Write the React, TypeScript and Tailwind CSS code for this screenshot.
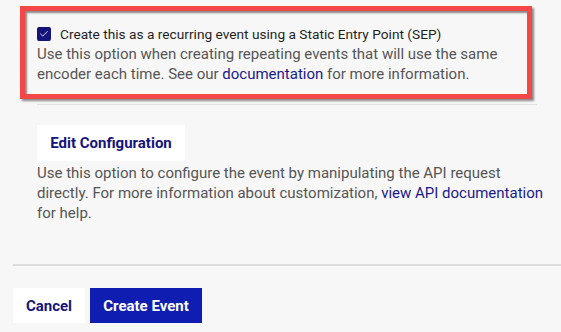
import { Check } from "lucide-react";

function CheckBox() {
  return (
    <span className="flex h-[14px] w-[14px] shrink-0 items-center justify-center rounded-[2px] bg-[#14147a]">
      <Check className="h-[10px] w-[10px] text-white" strokeWidth={2} />
    </span>
  );
}

export default function App() {
  return (
    <div className="h-[332px] w-[561px] overflow-hidden bg-[#f7f7f7] text-[15px] leading-[20px] text-[#555] [font-family:Roboto,'Liberation_Sans',sans-serif]">
      <section className="relative ml-[37px] w-[500px] border-b border-[#e0e0e0] pb-[20px] pt-[24px]">
        <label className="flex items-center gap-[9px] text-[13.7px] text-[#1f1f1f]">
          <CheckBox />
          Create this as a recurring event using a Static Entry Point (SEP)
        </label>
        <p>
          Use this option when creating repeating events that will use the same encoder each time. See our{" "}
          <a className="text-[#1a1a8c]">documentation</a> for more information.
        </p>
        <div className="pointer-events-none absolute left-[-17px] top-[6px] h-[93px] w-[512px] border-[5px] border-[#f44848] shadow-[2px_2px_2px_rgba(0,0,0,0.45),inset_2px_2px_2px_rgba(0,0,0,0.45)]" />
      </section>

      <section className="ml-[37px] w-[520px] pt-[20px]">
        <button className="h-[36px] w-[148px] bg-white text-[15px] font-bold text-[#14147a]">Edit Configuration</button>
        <p className="mt-[2px]">
          Use this option to configure the event by manipulating the API request
          <br />
          directly. For more information about customization, <a className="text-[#1a1a8c]">view API documentation</a>{" "}
          for help.
        </p>
      </section>

      <div className="ml-[13px] mt-[41px] h-[2px] bg-[#dedede]" />

      <div className="ml-[13px] mt-[22px] flex gap-[5px]">
        <button className="h-[35px] w-[72px] bg-white text-[15px] font-bold text-[#14147a]">Cancel</button>
        <button className="h-[35px] w-[112px] bg-[#0f1eb0] text-[15px] font-bold text-white">Create Event</button>
      </div>
    </div>
  );
}
